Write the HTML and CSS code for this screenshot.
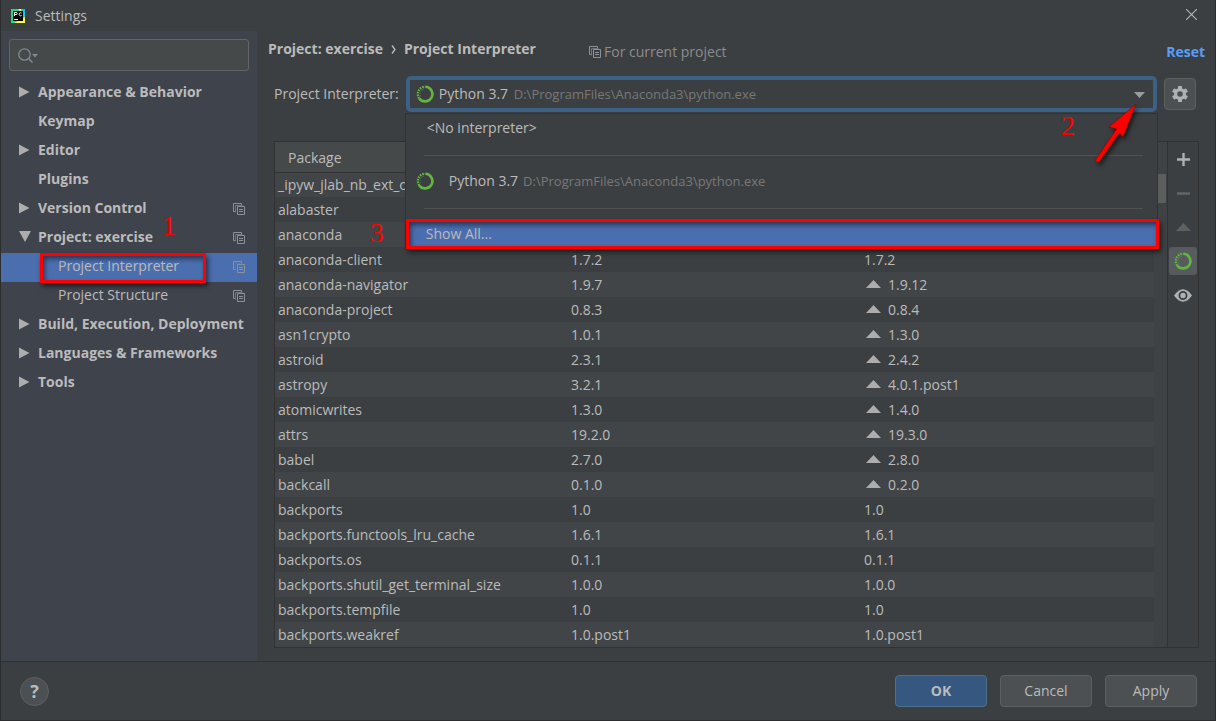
FILE: index.html
```html
<!DOCTYPE html>
<html lang="en">
<head>
<meta charset="utf-8">
<title>Settings</title>
<link rel="stylesheet" href="styles.css">
</head>
<body>
<svg class="defs" aria-hidden="true">
  <symbol id="ring" viewBox="0 0 18 18">
    <path d="M9.5 1.8A7.3 7.3 0 1 1 3.2 13.4" fill="none" stroke="#62b543" stroke-width="2.6"/>
    <path d="M3.2 13.4A7.3 7.3 0 0 1 9.5 1.8" fill="none" stroke="#62b543" stroke-width="2.2" stroke-dasharray="1.6 1"/>
    <path d="M4.4 11.2A5 5 0 0 1 8 4.2" fill="none" stroke="#62b543" stroke-width="0.8" stroke-dasharray="1 1.4"/>
  </symbol>
  <symbol id="copy" viewBox="0 0 12 12">
    <path d="M2.5 8.5H.5V.5H8.5V2.5" fill="none" stroke="#8b9196"/>
    <path d="M2.5 9.500V2.5H9.500" fill="none" stroke="#6f767b"/>
    <path d="M4.5 3.5H11.5V11.5H4.5ZM6 6.5H10M6 8.5H10" fill="none" stroke="#8b9196"/>
  </symbol>
  <symbol id="up" viewBox="0 0 15 8"><path d="M0 8L7.5 0L15 8Z" fill="currentColor"/></symbol>
  <symbol id="right" viewBox="0 0 12 12"><path d="M0 0.500L10.500 6L0 11.500Z" fill="#adadad"/></symbol>
  <symbol id="down" viewBox="0 0 12 12"><path d="M0 0H12L6 11Z" fill="#adadad"/></symbol>
</svg>
<div class="window">
  <header class="titlebar">
    <svg class="logo" viewBox="0 0 14 14" aria-hidden="true">
      <path d="M0 0H14V14H0Z" fill="#21d789"/>
      <path d="M7 0H10L14 5V14H3L14 8Z" fill="#fcf84a"/>
      <path d="M10 0H14V8L11 5Z" fill="#07c3f2"/>
      <path d="M2 2H12V12H2Z" fill="#000"/>
      <path d="M3.5 7V3.5H5.2A1 1 0 0 1 5.2 5.6H3.5M10.6 4.1A1.5 1.5 0 1 0 10.6 6.4M3.2 10.5H7" fill="none" stroke="#fff"/>
    </svg>
    <h1 class="title">Settings</h1>
    <button class="close" aria-label="Close"><svg viewBox="0 0 10 10"><path d="M0 0L10 10M10 0L0 10" stroke="#b5b5b5"/></svg></button>
  </header>
  <div class="body">
    <nav class="sidebar">
      <label class="search">
        <svg viewBox="0 0 20 15" aria-hidden="true"><circle cx="6.5" cy="6.5" r="5.7" fill="none" stroke="#7b8b91" stroke-width="1.3"/><path d="M10.5 10.5L14.5 14.5" stroke="#7b8b91" stroke-width="1.6"/><path d="M14 6H20L17 9.500Z" fill="#7b8b91"/></svg>
        <input type="search" aria-label="Search settings">
      </label>
      <ul class="tree">
        <li class="node"><svg class="arrow"><use href="#right"/></svg><span>Appearance &amp; Behavior</span></li>
        <li class="node"><i class="arrow"></i><span>Keymap</span></li>
        <li class="node"><svg class="arrow"><use href="#right"/></svg><span>Editor</span></li>
        <li class="node"><i class="arrow"></i><span>Plugins</span></li>
        <li class="node"><svg class="arrow"><use href="#right"/></svg><span>Version Control</span><svg class="copy"><use href="#copy"/></svg></li>
        <li class="node"><svg class="arrow"><use href="#down"/></svg><span>Project: exercise</span><svg class="copy"><use href="#copy"/></svg><b class="mark mark-one">1</b></li>
        <li class="node child selected"><span>Project Interpreter</span><svg class="copy"><use href="#copy"/></svg><b class="frame frame-node"></b></li>
        <li class="node child"><span>Project Structure</span><svg class="copy"><use href="#copy"/></svg></li>
        <li class="node"><svg class="arrow"><use href="#right"/></svg><span>Build, Execution, Deployment</span></li>
        <li class="node"><svg class="arrow"><use href="#right"/></svg><span>Languages &amp; Frameworks</span></li>
        <li class="node"><svg class="arrow"><use href="#right"/></svg><span>Tools</span></li>
      </ul>
    </nav>
    <main class="main">
      <div class="heading">
        <h2 class="crumbs"><span>Project: exercise</span><svg viewBox="0 0 5 9" aria-hidden="true"><path d="M1 .5L4 4.500L1 8.500" fill="none" stroke="#bbb" stroke-width="1.300"/></svg><span>Project Interpreter</span></h2>
        <p class="scope"><svg class="copy"><use href="#copy"/></svg>For current project</p>
        <a class="reset" href="#">Reset</a>
      </div>
      <div class="chooser">
        <label for="interpreter">Project Interpreter:</label>
        <div class="combo">
          <select id="interpreter"><option>Python 3.7</option></select>
          <svg class="ring combo-ring"><use href="#ring"/></svg>
          <span class="path combo-path">D:\ProgramFiles\Anaconda3\python.exe</span>
          <svg class="combo-arrow" viewBox="0 0 11 6"><path d="M0 0H11L5.500 6Z" fill="#9a9da0"/></svg>
          <div class="popup">
            <button class="item none">&lt;No interpreter&gt;</button>
            <hr>
            <button class="item env"><svg class="ring"><use href="#ring"/></svg><span>Python 3.7</span><span class="path">D:\ProgramFiles\Anaconda3\python.exe</span></button>
            <hr>
            <button class="item all">Show All...</button>
            <b class="frame frame-all"></b>
            <b class="mark mark-three">3</b>
            <b class="mark mark-two">2</b>
            <svg class="pointer" viewBox="0 0 46 64" aria-hidden="true"><path d="M41 2L14 25L21.500 27L1 57Q0 61 4 60L24.500 31L28 35Z" fill="#fe0000" stroke="#7a0000" stroke-width=".5"/></svg>
          </div>
        </div>
        <button class="gear" aria-label="Interpreter settings"><svg viewBox="0 0 16 16"><g fill="#afb1b3"><rect x="6" y="0" width="4" height="16" rx=".5"/><rect x="6" y="0" width="4" height="16" rx=".5" transform="rotate(60 8 8)"/><rect x="6" y="0" width="4" height="16" rx=".5" transform="rotate(120 8 8)"/><circle cx="8" cy="8" r="6"/></g><circle cx="8" cy="8" r="2.800" fill="#4c5052"/></svg></button>
      </div>
      <section class="packages">
        <table>
          <thead><tr><th>Package</th><th></th><th></th></tr></thead>
          <tbody>
            <tr><td>_ipyw_jlab_nb_ext_conf</td><td></td><td></td></tr>
            <tr><td>alabaster</td><td></td><td></td></tr>
            <tr><td>anaconda</td><td></td><td></td></tr>
            <tr><td>anaconda-client</td><td>1.7.2</td><td>1.7.2</td></tr>
            <tr><td>anaconda-navigator</td><td>1.9.7</td><td><svg class="up"><use href="#up"/></svg>1.9.12</td></tr>
            <tr><td>anaconda-project</td><td>0.8.3</td><td><svg class="up"><use href="#up"/></svg>0.8.4</td></tr>
            <tr><td>asn1crypto</td><td>1.0.1</td><td><svg class="up"><use href="#up"/></svg>1.3.0</td></tr>
            <tr><td>astroid</td><td>2.3.1</td><td><svg class="up"><use href="#up"/></svg>2.4.2</td></tr>
            <tr><td>astropy</td><td>3.2.1</td><td><svg class="up"><use href="#up"/></svg>4.0.1.post1</td></tr>
            <tr><td>atomicwrites</td><td>1.3.0</td><td><svg class="up"><use href="#up"/></svg>1.4.0</td></tr>
            <tr><td>attrs</td><td>19.2.0</td><td><svg class="up"><use href="#up"/></svg>19.3.0</td></tr>
            <tr><td>babel</td><td>2.7.0</td><td><svg class="up"><use href="#up"/></svg>2.8.0</td></tr>
            <tr><td>backcall</td><td>0.1.0</td><td><svg class="up"><use href="#up"/></svg>0.2.0</td></tr>
            <tr><td>backports</td><td>1.0</td><td>1.0</td></tr>
            <tr><td>backports.functools_lru_cache</td><td>1.6.1</td><td>1.6.1</td></tr>
            <tr><td>backports.os</td><td>0.1.1</td><td>0.1.1</td></tr>
            <tr><td>backports.shutil_get_terminal_size</td><td>1.0.0</td><td>1.0.0</td></tr>
            <tr><td>backports.tempfile</td><td>1.0</td><td>1.0</td></tr>
            <tr><td>backports.weakref</td><td>1.0.post1</td><td>1.0.post1</td></tr>
          </tbody>
        </table>
        <div class="scroll"><i class="thumb"></i></div>
        <div class="tools">
          <button aria-label="Install"><svg width="13" height="13" viewBox="0 0 13 13"><path d="M0 6.500H13M6.500 0V13" stroke="#afb1b3" stroke-width="2.400"/></svg></button>
          <button aria-label="Uninstall"><svg width="13" height="13" viewBox="0 0 13 13"><path d="M0 6.500H13" stroke="#636566" stroke-width="2.400"/></svg></button>
          <button class="dim" aria-label="Upgrade"><svg class="up"><use href="#up"/></svg></button>
          <button class="on" aria-label="Use Conda Package Manager"><svg class="ring"><use href="#ring"/></svg></button>
          <button aria-label="Show early releases"><svg width="18" height="13" viewBox="0 0 18 13"><path d="M0 6.500Q9 -6 18 6.500Q9 19 0 6.500Z" fill="#afb1b3"/><circle cx="9" cy="6.500" r="3.600" fill="none" stroke="#3c3f41" stroke-width="1.800"/></svg></button>
        </div>
      </section>
    </main>
  </div>
  <footer class="footer">
    <button class="help" aria-label="Help">?</button>
    <button class="btn primary">OK</button>
    <button class="btn">Cancel</button>
    <button class="btn">Apply</button>
  </footer>
</div>
</body>
</html>
```
FILE: styles.css
```css
* { box-sizing: border-box; }
body {
  margin: 0;
  background: #3c3f41;
  color: #bbbbbb;
  font: 14px/20px "Open Sans", "Noto Sans", sans-serif;
}
button, input, select { font: inherit; color: inherit; }
button { padding: 0; border: 0; background: none; }
svg { display: block; flex: none; }
h1, h2, p, ul { margin: 0; padding: 0; font-size: inherit; }
.defs { position: absolute; width: 0; height: 0; }
.window {
  display: flex;
  flex-direction: column;
  min-height: 100vh;
  border: solid #2b2d2e;
  border-width: 0 1px 1px;
}
.titlebar { display: flex; align-items: center; height: 31px; padding: 0 18px 0 10px; }
.logo { width: 14px; height: 14px; }
.title { flex: 1; margin-left: 10px; font-weight: 400; }
.close svg { width: 11px; height: 11px; }
.close { padding-bottom: 3px; }

.body { display: flex; flex: 1; }
.sidebar { flex: none; width: 256px; padding-top: 8px; background: #3f434c; }
.search {
  display: flex;
  align-items: center;
  height: 32px;
  margin: 0 8px 8px;
  padding: 0 8px;
  border: 1px solid #646464;
  border-radius: 3px;
  background: #45494a;
}
.search svg { width: 20px; height: 15px; }
.search input { flex: 1; min-width: 0; border: 0; outline: 0; background: none; }
.tree { list-style: none; }
.node {
  position: relative;
  display: flex;
  align-items: center;
  height: 29px;
  padding: 0 12px 4px 18px;
  font-weight: 700;
}
.node span { flex: 1; white-space: nowrap; }
.arrow { width: 12px; height: 12px; margin-right: 7px; }
.child { padding-left: 57px; font-weight: 400; }
.selected { background: #4b6eaf; }
.copy { width: 12px; height: 12px; }
.node .copy { margin-top: 3px; }

.main { flex: 1; min-width: 0; padding: 0 16px 13px 17px; }
.heading { display: flex; align-items: center; height: 42px; margin: 0 -6px 0 -6px; }
.crumbs { display: flex; align-items: center; gap: 8px; padding-bottom: 6px; font-weight: 700; }
.crumbs svg { width: 5px; height: 9px; }
.scope { display: flex; align-items: center; gap: 3px; margin-left: 53px; color: #8c8c8c; }
.reset { margin-left: auto; color: #589df6; font-weight: 700; text-decoration: none; }
.chooser { display: flex; align-items: center; padding: 3px 3px 0 0; }
.combo { position: relative; flex: 1; height: 36px; margin: 0 7px; }
.combo select {
  width: 100%;
  height: 36px;
  padding: 0 0 0 29px;
  border: 4px solid #3d6185;
  border-radius: 5px;
  outline: 0;
  background: #3c3f41;
  appearance: none;
}
.ring { width: 18px; height: 18px; }
.path { color: #787878; font-size: 13px; }
.combo-ring, .combo-path, .combo-arrow { position: absolute; pointer-events: none; }
.combo-ring { left: 10px; top: 9px; }
.combo-path { left: 108px; top: 8px; }
.combo-arrow { right: 12px; top: 16px; width: 11px; height: 6px; }
.popup {
  position: absolute;
  z-index: 2;
  top: 37px;
  left: -1px;
  right: -1px;
  border: 1px solid #323232;
  border-bottom: 0;
  background: #3c3f41;
}
.popup hr { height: 1px; margin: 13px 14px 11px 18px; border: 0; background: #515151; }
.item { display: flex; align-items: center; width: 100%; height: 28px; text-align: left; }
.none { padding-left: 21px; }
.env { padding-left: 10px; }
.env .path { margin-left: 5px; }
.env .ring { margin-right: 15px; }
.all { padding-left: 20px; background: #4b6eaf; }
.gear {
  display: grid;
  place-items: center;
  width: 32px;
  height: 32px;
  border: 1px solid #5e6060;
  border-radius: 4px;
  background: #4c5052;
}
.gear svg { width: 16px; height: 16px; }

.packages { display: flex; margin-top: 29px; border: 1px solid #323232; }
table { flex: 1; width: 100%; border-collapse: collapse; table-layout: fixed; }
th, td { height: 25px; padding: 0 3px; text-align: left; font-weight: 400; white-space: nowrap; }
th { height: 30px; padding: 2px 0 0 13px; border-bottom: 1px solid #323232; background: #45494a; }
tbody tr:nth-child(odd) { background: #414547; }
td .up { display: inline-block; margin: 0 7px 3px 2px; vertical-align: middle; }
.up { width: 15px; height: 8px; color: #adadad; }
.scroll { flex: none; width: 13px; padding: 32px 1px 0 4px; background: #3f4244; }
.thumb { display: block; height: 29px; background: #5c5e5e; }
.tools {
  display: flex;
  flex: none;
  flex-direction: column;
  align-items: center;
  gap: 6px;
  width: 31px;
  padding-top: 3px;
  border-left: 1px solid #323232;
}
.tools button { display: grid; place-items: center; width: 28px; height: 28px; border-radius: 3px; }
.tools .on { background: #565b5d; }
.dim .up { color: #5e6060; }

.footer {
  display: flex;
  align-items: center;
  gap: 13px;
  padding: 13px 18px 13px 19px;
  border-top: 1px solid #2f3133;
}
.btn {
  width: 92px;
  height: 32px;
  border: 1px solid #5e6060;
  border-radius: 4px;
  background: #4c5052;
}
.primary { border-color: #4c708c; background: #365880; font-weight: 700; }
.help {
  width: 29px;
  height: 29px;
  margin-right: auto;
  border: 1px solid #5e6060;
  border-radius: 50%;
  background: #4c5052;
  font-size: 18px;
  font-weight: 700;
}

/* Red tutorial callouts drawn above the dialog */
.mark { position: absolute; color: #fe0000; font: 28px/28px "Liberation Serif", serif; }
.frame {
  position: absolute;
  border: 3px solid #fe0000;
  box-shadow: 2px 3px 5px rgba(0, 0, 0, .6), inset 2px 3px 5px rgba(0, 0, 0, .5);
  pointer-events: none;
}
.mark-one { left: 161px; top: -12px; }
.frame-node { left: 39px; top: 0; width: 166px; height: 30px; }
.frame-all { left: 0; right: -2px; bottom: -1px; height: 30px; }
.mark-three { left: -36px; bottom: 1px; }
.mark-two { right: 82px; top: -2px; }
.pointer {
  position: absolute;
  right: 16px;
  top: -12px;
  width: 46px;
  height: 64px;
  filter: drop-shadow(2px 3px 2px rgba(0, 0, 0, .6));
}
```
